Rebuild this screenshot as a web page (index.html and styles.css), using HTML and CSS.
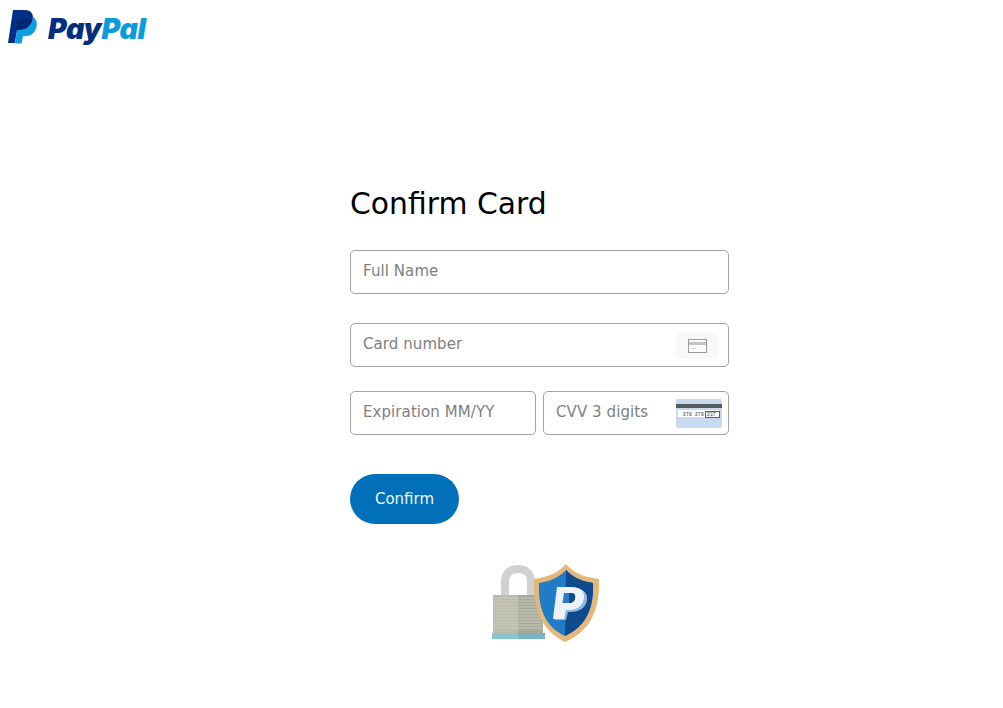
FILE: index.html
```html
<!DOCTYPE html>
<html lang="en">
<head>
<meta charset="utf-8">
<title>Confirm Card</title>
<link rel="stylesheet" href="styles.css">
</head>
<body>
<header class="brand">
  <svg class="brand-mark" width="30" height="34" viewBox="0 0 30 34" aria-hidden="true">
    <path fill="#0a9de0" d="M7 33.500h6.500L15 26h3c5 0 9-3 10.500-9C29.500 12 28 9 25 7 25 13 20 20 11 20H9z"/>
    <path fill="#012f86" d="M5 0h11c8 0 10 5 8.500 10C22.500 17 17 20 11 20H9L6.800 33H0z"/>
    <path fill="#001c64" d="M9.500 10.500C15 9 21 9 24.700 9.500 23.500 15 17 20 11 20H8.500L7.500 26z" opacity=".55"/>
  </svg>
  <span class="brand-name"><span class="brand-pay">Pay</span><span class="brand-pal">Pal</span></span>
</header>
<main class="panel">
  <h1 class="title">Confirm Card</h1>
  <form class="form">
    <div class="field field-name"><span class="hint">Full Name</span></div>
    <div class="field field-card">
      <span class="hint">Card number</span>
      <span class="card-chip">
        <svg width="19" height="14" viewBox="0 0 19 14" aria-hidden="true">
          <rect x=".5" y=".5" width="18" height="13" fill="#fafafa" stroke="#9a9a9a"/>
          <rect x="1" y="3" width="17" height="3" fill="#c4c4c4"/>
          <rect x="3" y="9" width="5" height="1" fill="#d4d4d4"/>
        </svg>
      </span>
    </div>
    <div class="split">
      <div class="field"><span class="hint">Expiration MM/YY</span></div>
      <div class="field">
        <span class="hint">CVV 3 digits</span>
        <svg class="cvv" width="47" height="29" viewBox="0 0 47 29" aria-hidden="true">
          <rect x="1" width="46" height="29" rx="2" fill="#c9daee"/>
          <rect x="1" y="5" width="46" height="4" fill="#555a60"/>
          <rect x="3" y="11" width="41" height="7" fill="#fff"/>
          <text class="cvv-digits" x="8" y="16.500">278 278 237</text>
          <rect class="cvv-box" x="30.500" y="12.500" width="14" height="6"/>
        </svg>
      </div>
    </div>
    <button class="submit" type="button">Confirm</button>
  </form>
  <div class="seal">
    <svg width="110" height="80" viewBox="0 0 110 80" aria-hidden="true">
      <path d="M11 33V19C11 8 18 2 28 2s17 6 17 17v14h-8V19c0-6-3-9-9-9s-9 3-9 9v14z" fill="#cfd2d0"/>
      <rect x="3" y="32" width="25" height="38" fill="#bcbcab"/>
      <rect x="28" y="32" width="25" height="38" fill="#a8a99c"/>
      <path d="M3 35h50M3 38h50M3 41h50M3 44h50M3 47h50M3 50h50M3 53h50M3 56h50M3 59h50M3 62h50M3 65h50" stroke="#d4d4c6" stroke-width=".7"/>
      <rect x="2" y="70" width="26" height="6" fill="#86c5cc"/>
      <rect x="28" y="70" width="27" height="6" fill="#79b5bc"/>
      <path d="M76 1c6 7 15 13 33 15 1 30-8 52-34 63C52 68 43 46 44 16 60 14 70 8 76 1z" fill="#e5b878"/>
      <path d="M76 7c6 6 13 11 27 13 1 24-6 43-28 53C54 63 48 44 49 20 63 18 70 13 76 7z" fill="#1f7cc6"/>
      <path d="M76 7c6 6 13 11 27 13 1 24-6 43-28 53z" fill="#0e4a8c"/>
      <path d="M68 25h16c9 0 14 5 13 12-1 8-8 12-16 12h-3l-2 8H65z" fill="#8fb8e0"/>
      <path d="M67 24h15c9 0 13 5 12 11-1 8-7 12-15 12h-3l-2 9H63z" fill="#eef1f5"/>
      <path d="M74 30h7c3 0 5 2 4 5 0 3-3 5-6 5h-6.500z" fill="#2a7cc4"/>
      <path d="M79 30h2c3 0 5 2 4 5 0 3-3 5-6 5z" fill="#0e4a8c"/>
    </svg>
  </div>
</main>
</body>
</html>
```
FILE: styles.css
```css
* { box-sizing: border-box; }
body {
  margin: 0;
  background: #fff;
  font-family: "DejaVu Sans", sans-serif;
}
.brand {
  display: flex;
  align-items: flex-start;
  gap: 10px;
  height: 121px;
  padding: 10px 0 0 8px;
}
.brand-name {
  font: italic 900 28.500px/38px Inter, sans-serif;
  letter-spacing: -.3px;
}
.brand-pay { color: #012f7f; }
.brand-pal { color: #0a9bdc; }
.panel {
  width: 379px;
  margin-left: 350px;
}
.title {
  margin: 0;
  height: 129px;
  padding-top: 63px;
  font-size: 29.8px;
  font-weight: 400;
  line-height: 40px;
  color: #000;
}
.form {
  display: flex;
  flex-direction: column;
}
.field {
  position: relative;
  display: flex;
  align-items: center;
  justify-content: space-between;
  height: 44px;
  padding: 0 6px 2px 12px;
  border: 1px solid #a3a3a3;
  border-radius: 5px;
  background: #fff;
}
.field-name { margin-bottom: 29px; }
.field-card { margin-bottom: 24px; }
.hint {
  font-size: 15px;
  letter-spacing: .08px;
  color: #808080;
  white-space: nowrap;
}
.card-chip {
  display: flex;
  align-items: center;
  justify-content: center;
  width: 42px;
  height: 26px;
  margin: 3px 4px 0 0;
  border-radius: 4px;
  background: #f8f8f8;
}
.cvv { margin-top: 2px; }
.cvv-digits {
  font: 700 4.6px "Liberation Mono", monospace;
  letter-spacing: .25px;
  fill: #666;
}
.cvv-box {
  fill: none;
  stroke: #b03a5a;
}
.split {
  display: grid;
  grid-template-columns: 186px 186px;
  gap: 7px;
}
.submit {
  width: 109px;
  height: 50px;
  margin-top: 39px;
  border: 0;
  border-radius: 25px;
  background: #0070ba;
  color: #f2f8fc;
  font: 400 15px "DejaVu Sans", sans-serif;
}
.seal {
  display: flex;
  margin: 39px 0 0 140px;
}
```
